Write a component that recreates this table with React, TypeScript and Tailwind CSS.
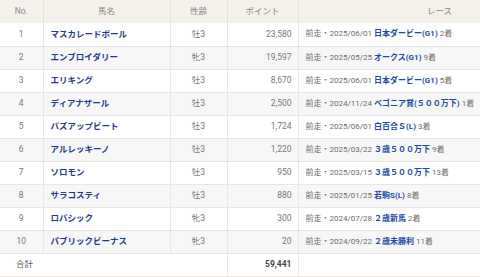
const rows = [
  { no: 1, name: 'マスカレードボール', sex: '牡3', pt: '23,580', date: '2025/06/01', race: '日本ダービー(G1)', rank: '2着' },
  { no: 2, name: 'エンブロイダリー', sex: '牝3', pt: '19,597', date: '2025/05/25', race: 'オークス(G1)', rank: '9着' },
  { no: 3, name: 'エリキング', sex: '牡3', pt: '8,670', date: '2025/06/01', race: '日本ダービー(G1)', rank: '5着' },
  { no: 4, name: 'ディアナザール', sex: '牡3', pt: '2,500', date: '2024/11/24', race: 'ベゴニア賞(５００万下)', rank: '1着' },
  { no: 5, name: 'バズアップビート', sex: '牡3', pt: '1,724', date: '2025/06/01', race: '白百合Ｓ(L)', rank: '3着' },
  { no: 6, name: 'アルレッキーノ', sex: '牡3', pt: '1,220', date: '2025/03/22', race: '３歳５００万下', rank: '9着' },
  { no: 7, name: 'ソロモン', sex: '牡3', pt: '950', date: '2025/03/15', race: '３歳５００万下', rank: '13着' },
  { no: 8, name: 'サラコスティ', sex: '牡3', pt: '880', date: '2025/01/25', race: '若駒S(L)', rank: '8着' },
  { no: 9, name: 'ロバシック', sex: '牝3', pt: '300', date: '2024/07/28', race: '２歳新馬', rank: '2着' },
  { no: 10, name: 'パブリックビーナス', sex: '牝3', pt: '20', date: '2024/09/22', race: '２歳未勝利', rank: '11着' },
];

export default function App() {
  return (
    <div className="w-[480px] h-[277px] overflow-hidden bg-white" style={{ fontFamily: 'Roboto, "Noto Sans CJK JP", sans-serif' }}>
      <table className="w-[480px] table-fixed border-collapse text-[8.5px] leading-none">
        <colgroup>
          <col className="w-[43px]" />
          <col className="w-[127px]" />
          <col className="w-[57px]" />
          <col className="w-[71px]" />
          <col className="w-[182px]" />
        </colgroup>
        <thead>
          <tr className="h-[23px] bg-[#f3f1ea] text-[#8a8a8a]">
            <th className="font-normal text-center border-r border-[#e4e1d9]">No.</th>
            <th className="font-normal text-center border-r border-[#e4e1d9]">馬名</th>
            <th className="font-normal text-center border-r border-[#e4e1d9]">性齢</th>
            <th className="font-normal text-center border-r border-[#e4e1d9]">ポイント</th>
            <th className="font-normal text-right pr-[28px]">レース</th>
          </tr>
        </thead>
        <tbody>
          {rows.map((r, i) => (
            <tr key={r.no} className={`h-[23px] border-b border-[#e6e6e6] ${i % 2 ? 'bg-[#f7f7f7]' : 'bg-white'}`}>
              <td className="text-center text-[#777] border-r border-[#e6e6e6]">{r.no}</td>
              <td className="pl-[7px] font-bold text-[#1f3a8a] border-r border-[#e6e6e6] whitespace-nowrap">{r.name}</td>
              <td className="text-center text-[#777] border-r border-[#e6e6e6]">{r.sex}</td>
              <td className="text-right pr-[6px] text-[#777] border-r border-[#e6e6e6]">{r.pt}</td>
              <td className="pl-[7px] text-[8px] text-[#6b6b6b] whitespace-nowrap">
                前走・{r.date} <span className="font-bold text-[#1c4aa0]">{r.race}</span> {r.rank}
              </td>
            </tr>
          ))}
          <tr className="h-[23px] border-b border-[#ebe7dd] bg-white">
            <td colSpan={3} className="pl-[16px] text-[#555] border-r border-[#e6e6e6]">合計</td>
            <td className="text-right pr-[6px] font-bold text-[#444] border-r border-[#e6e6e6]">59,441</td>
            <td></td>
          </tr>
        </tbody>
      </table>
    </div>
  );
}
